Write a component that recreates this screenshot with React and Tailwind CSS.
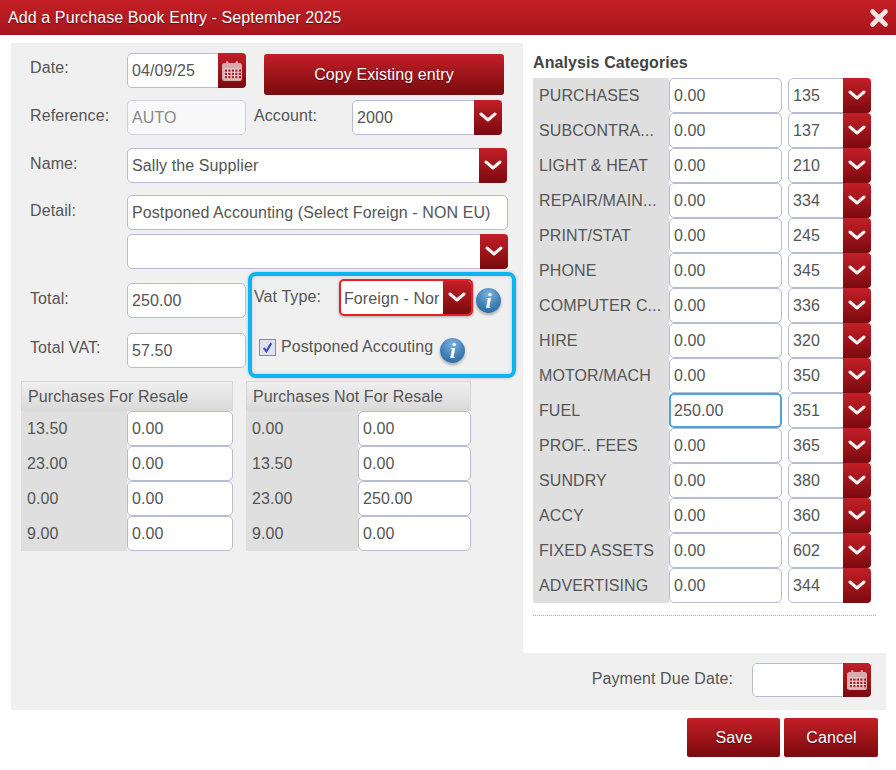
const redBtn = "bg-gradient-to-b from-[#c41f27] to-[#7a0a0e]";
const inputBase = "block w-full h-full min-w-0 rounded-[5px] text-[16px] outline-none";
const inputCls = `${inputBase} bg-white border border-[#b8bcd2] pl-[4px] text-[#555]`;
const disabledCls = `${inputBase} bg-[#f8f8f8] border border-[#ccd0df] pl-[4px] text-[#8a8a8a]`;
const focusCls = `${inputBase} bg-white border-2 border-[#4da3dd] pl-[3px] text-[#555]`;

function Chevron() {
  return (
    <svg width="18" height="11" viewBox="0 0 18 11" fill="none">
      <path d="M2 2 L9 8 L16 2" stroke="#fff" strokeWidth="3" strokeLinecap="round" strokeLinejoin="round" opacity="0.95" />
    </svg>
  );
}

function Calendar() {
  const dots = [];
  for (let r = 0; r < 3; r++) for (let c = 0; c < 5; c++) dots.push(<rect key={r + "-" + c} x={3.8 + c * 3.5} y={9.5 + r * 3.3} width="2.2" height="2.2" fill="#a8202a" />);
  return (
    <svg width="22" height="22" viewBox="0 0 22 22">
      <rect x="1" y="3" width="20" height="18" rx="2.5" fill="#d9a9ab" />
      <rect x="2.8" y="8.4" width="16.4" height="11" fill="#e9cfd0" />
      <rect x="5" y="1" width="2.4" height="5" rx="1.2" fill="#d9a9ab" />
      <rect x="14.6" y="1" width="2.4" height="5" rx="1.2" fill="#d9a9ab" />
      {dots}
    </svg>
  );
}

function Info() {
  return (
    <div className="w-[25px] h-[25px] shrink-0 rounded-full bg-[radial-gradient(circle_at_50%_25%,#7fb2dc_0%,#3f7fb8_55%,#2a5f95_100%)] shadow-[0_2px_3px_rgba(0,0,0,0.3)] flex items-center justify-center text-white italic font-bold text-[22px] leading-none font-['Liberation_Serif',serif]">
      i
    </div>
  );
}

function Field({ value, w, disabled, icon, h = "h-[35px]", focus }) {
  return (
    <div className={`relative flex ${h} ${w} shrink-0`}>
      <input readOnly value={value} disabled={disabled} className={disabled ? disabledCls : focus ? focusCls : inputCls} />
      {icon && (
        <div className={`absolute right-0 top-0 bottom-0 w-[28px] rounded-r-[4px] ${redBtn} flex items-center justify-center`}>
          {icon === "cal" ? <Calendar /> : <Chevron />}
        </div>
      )}
    </div>
  );
}

function Label({ children, pt = "pt-[4px]" }) {
  return <div className={`w-[116px] shrink-0 pl-[19px] ${pt} leading-[24px] text-[16px] text-[#555]`}>{children}</div>;
}

function RateTable({ title, rows, w, labelW, cls }) {
  return (
    <div className={`${w} ${cls}`}>
      <div className="h-[30px] border border-[#d6d6d6] border-b-0 bg-gradient-to-b from-[#efefef] to-[#d9d9d9] pl-[6px] leading-[29px] text-[16px] text-[#555]">{title}</div>
      {rows.map(([rate, val]) => (
        <div key={rate} className="flex h-[35px]">
          <div className={`${labelW} shrink-0 bg-[#dfdfdf] pl-[6px] leading-[35px] text-[16px] text-[#555]`}>{rate}</div>
          <div className="flex-1 min-w-0"><input readOnly value={val} className={inputCls} /></div>
        </div>
      ))}
    </div>
  );
}

const cats = [
  ["PURCHASES", "0.00", "135"],
  ["SUBCONTRA...", "0.00", "137"],
  ["LIGHT & HEAT", "0.00", "210"],
  ["REPAIR/MAIN...", "0.00", "334"],
  ["PRINT/STAT", "0.00", "245"],
  ["PHONE", "0.00", "345"],
  ["COMPUTER C...", "0.00", "336"],
  ["HIRE", "0.00", "320"],
  ["MOTOR/MACH", "0.00", "350"],
  ["FUEL", "250.00", "351"],
  ["PROF.. FEES", "0.00", "365"],
  ["SUNDRY", "0.00", "380"],
  ["ACCY", "0.00", "360"],
  ["FIXED ASSETS", "0.00", "602"],
  ["ADVERTISING", "0.00", "344"],
];

export default function App() {
  return (
    <div className="w-[896px] h-[770px] bg-white overflow-hidden tracking-[0.1px] font-['Liberation_Sans',Arial,sans-serif]">
      <div className="h-[35px] bg-gradient-to-b from-[#c41f27] to-[#a8151c] flex items-center justify-between pl-[8px] pr-[7px]">
        <div className="text-white text-[16px] [text-shadow:0_1px_1px_rgba(0,0,0,0.5)]">Add a Purchase Book Entry - September 2025</div>
        <svg width="20" height="20" viewBox="0 0 20 20"><path d="M3.5 3.5 L16.5 16.5 M16.5 3.5 L3.5 16.5" stroke="#f4e4e4" strokeWidth="4.6" strokeLinecap="round" /></svg>
      </div>

      <div className="ml-[11px] mt-[8px] w-[875px]">
        <div className="flex h-[610px]">
          <div className="w-[512px] h-full bg-[#f0f0f0] pt-[10px]">
            <div className="flex h-[42px] mb-[5px]">
              <Label pt="pt-[3px]">Date:</Label>
              <Field value="04/09/25" w="w-[119px]" icon="cal" />
              <button className={`ml-[18px] mt-[1px] w-[240px] h-[41px] rounded-[3px] ${redBtn} text-white text-[16px] [text-shadow:0_1px_1px_rgba(0,0,0,0.5)]`}>Copy Existing entry</button>
            </div>
            <div className="flex h-[35px] mb-[13px]">
              <Label>Reference:</Label>
              <Field value="AUTO" w="w-[119px]" disabled />
              <div className="w-[106px] pl-[8px] pt-[4px] leading-[24px] text-[16px] text-[#555] shrink-0">Account:</div>
              <Field value="2000" w="w-[150px]" icon="chev" />
            </div>
            <div className="flex h-[35px] mb-[12px]">
              <Label>Name:</Label>
              <Field value="Sally the Supplier" w="w-[380px]" icon="chev" />
            </div>
            <div className="flex h-[35px] mb-[4px]">
              <Label>Detail:</Label>
              <Field value="Postponed Accounting (Select Foreign - NON EU)" w="w-[381px]" />
            </div>
            <div className="flex h-[35px] mb-[3px]">
              <div className="w-[116px] shrink-0" />
              <Field value="" w="w-[381px]" icon="chev" />
            </div>

            <div className="flex h-[106px] mb-[3px]">
              <div className="shrink-0 pt-[11px]">
                <div className="flex h-[35px] mb-[15px]">
                  <Label>Total:</Label>
                  <Field value="250.00" w="w-[119px]" />
                </div>
                <div className="flex h-[35px]">
                  <Label pt="pt-[3px]">Total VAT:</Label>
                  <Field value="57.50" w="w-[119px]" />
                </div>
              </div>
              <div className="ml-[2px] w-[268px] h-[106px] border-[4px] border-[#0db4f0] rounded-[8px] shadow-[inset_0_0_4px_rgba(0,0,0,0.15),0_0_3px_rgba(0,0,0,0.25)]">
                <div className="flex items-start pt-[3px] pl-[2px]">
                  <div className="w-[85px] pt-[6px] leading-[24px] text-[16px] text-[#555] shrink-0">Vat Type:</div>
                  <div className="relative flex w-[134px] h-[37px] border-2 border-[#ee1c25] rounded-[5px] bg-white shadow-[0_1px_3px_rgba(0,0,0,0.3)] overflow-hidden shrink-0">
                    <div className="w-[102px] pl-[3px] pr-[4px] shrink-0">
                      <div className="overflow-hidden whitespace-nowrap leading-[36px] text-[16px] text-[#555]">Foreign - Non EU</div>
                    </div>
                    <div className={`flex-1 ${redBtn} flex items-center justify-center`}><Chevron /></div>
                  </div>
                  <div className="ml-[3px] mt-[9px]"><Info /></div>
                </div>
                <div className="flex items-start mt-[22px] pl-[7px]">
                  <span className="mt-[1px] w-[17px] h-[17px] shrink-0 border border-[#8a8a8a] bg-[#dfe2ee] flex items-center justify-center">
                    <svg width="13" height="13" viewBox="0 0 12 12"><path d="M2.5 6.5 L5 9.5 L9.5 2" stroke="#3b55b5" strokeWidth="2" fill="none" /></svg>
                  </span>
                  <span className="ml-[5px] -mt-[3px] text-[16px] text-[#555] leading-[24px] whitespace-nowrap">Postponed Accouting</span>
                  <span className="ml-[7px]"><Info /></span>
                </div>
              </div>
            </div>

            <div className="flex pl-[10px]">
              <RateTable title="Purchases For Resale" w="w-[212px]" labelW="w-[106px]" rows={[["13.50", "0.00"], ["23.00", "0.00"], ["0.00", "0.00"], ["9.00", "0.00"]]} />
              <RateTable title="Purchases Not For Resale" w="w-[225px]" cls="ml-[13px]" labelW="w-[112px]" rows={[["0.00", "0.00"], ["13.50", "0.00"], ["23.00", "250.00"], ["9.00", "0.00"]]} />
            </div>
          </div>

          <div className="flex-1 pl-[10px] pr-[10px]">
            <div className="h-[35px] pt-[8px] leading-[24px] text-[16px] font-bold text-[#444]">Analysis Categories</div>
            {cats.map(([name, val, code]) => (
              <div key={name} className="flex h-[35px] w-[338px]">
                <div className="w-[136px] shrink-0 bg-[#dfdfdf] pl-[6px] leading-[35px] text-[16px] text-[#555] whitespace-nowrap overflow-hidden">{name}</div>
                <Field value={val} w="w-[113px]" focus={name === "FUEL"} />
                <div className="w-[6px] shrink-0" />
                <Field value={code} w="w-[83px]" icon="chev" />
              </div>
            ))}
            <div className="mt-[12px] w-[343px] border-t border-dotted border-[#aaa]" />
          </div>
        </div>

        <div className="h-[57px] bg-[#f0f0f0] flex justify-end items-start pt-[10px] pr-[15px]">
          <div className="text-[16px] text-[#555] leading-[24px] mr-[19px] pt-[4px]">Payment Due Date:</div>
          <Field value="" w="w-[119px]" h="h-[34px]" icon="cal" />
        </div>
      </div>

      <div className="flex justify-end gap-[4px] pt-[8px] pr-[18px]">
        <button className={`w-[93px] h-[39px] pt-[1px] pl-[1px] rounded-[2px] ${redBtn} text-white text-[16px] [text-shadow:0_1px_1px_rgba(0,0,0,0.5)]`}>Save</button>
        <button className={`w-[94px] h-[39px] pt-[1px] pl-[1px] rounded-[2px] ${redBtn} text-white text-[16px] [text-shadow:0_1px_1px_rgba(0,0,0,0.5)]`}>Cancel</button>
      </div>
    </div>
  );
}
